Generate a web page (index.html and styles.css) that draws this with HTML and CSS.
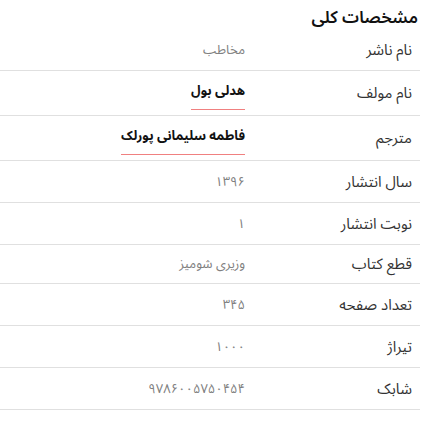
FILE: index.html
```html
<!DOCTYPE html>
<html lang="fa">
<head>
<meta charset="utf-8">
<link rel="stylesheet" href="styles.css">
</head>
<body>
<div class="specs">
  <h2 class="title">مشخصات کلی</h2>
  <div class="row r42"><div class="label">نام ناشر</div><div class="value">مخاطب</div></div>
  <div class="row r45"><div class="label">نام مولف</div><div class="value"><span class="link">هدلی بول</span></div></div>
  <div class="row r45"><div class="label">مترجم</div><div class="value"><span class="link">فاطمه سلیمانی پورلک</span></div></div>
  <div class="row r42"><div class="label">سال انتشار</div><div class="value">۱۳۹۶</div></div>
  <div class="row r42"><div class="label">نوبت انتشار</div><div class="value">۱</div></div>
  <div class="row r39"><div class="label">قطع کتاب</div><div class="value">وزیری شومیز</div></div>
  <div class="row r42"><div class="label">تعداد صفحه</div><div class="value">۳۴۵</div></div>
  <div class="row r42"><div class="label">تیراژ</div><div class="value">۱۰۰۰</div></div>
  <div class="row r42"><div class="label">شابک</div><div class="value">۹۷۸۶۰۰۵۷۵۰۴۵۴</div></div>
</div>
</body>
</html>
```
FILE: styles.css
```css
html, body {
  margin: 0;
  padding: 0;
  background: #fff;
}
body {
  font-family: "Noto Sans Arabic", "Noto Naskh Arabic", "Noto Sans", sans-serif;
  color: #333;
}
.specs {
  width: 420px;
  direction: rtl;
}
.title {
  margin: 0;
  height: 29px;
  line-height: normal;
  font-size: 17px;
  font-weight: 600;
  color: #111;
  padding-right: 2px;
  box-sizing: border-box;
}
.row {
  display: flex;
  align-items: center;
  border-bottom: 1px solid #e0e0e0;
  box-sizing: border-box;
}
.r42 { height: 42px; }
.r45 { height: 45px; }
.r39 { height: 39px; }
.label {
  width: 175px;
  box-sizing: border-box;
  padding-right: 8px;
  font-size: 15px;
  color: #333;
}
.value {
  font-size: 13px;
  color: #808080;
}
.link {
  display: inline-block;
  font-size: 13px;
  font-weight: bold;
  color: #111;
  border-bottom: 1px solid #f08080;
  padding-bottom: 4px;
}
```
